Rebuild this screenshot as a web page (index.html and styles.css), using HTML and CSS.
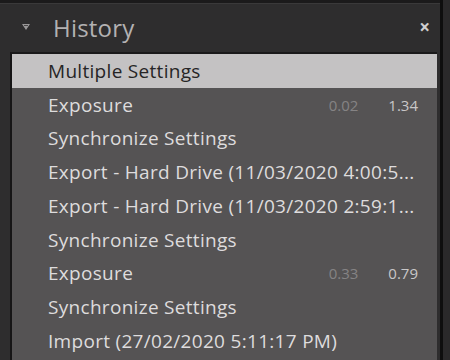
FILE: index.html
```html
<!DOCTYPE html>
<html>
<head>
<meta charset="utf-8">
<link rel="stylesheet" href="styles.css">
</head>
<body>
<div class="frame">
  <div class="panel">
    <div class="topline"></div>
    <div class="header">
      <svg class="tri" width="10" height="8" viewBox="0 0 10 8"><path d="M1 1 H9 L5 7 Z" fill="#9a9899"/><path d="M3 2.5 H7" stroke="#4a4849" stroke-width="1"/></svg>
      <span class="title">History</span>
      <span class="close">×</span>
    </div>
    <div class="list">
      <div class="row sel"><span class="name">Multiple Settings</span></div>
      <div class="row"><span class="name">Exposure</span><span class="vals"><span class="old">0.02</span><span class="new">1.34</span></span></div>
      <div class="row"><span class="name">Synchronize Settings</span></div>
      <div class="row"><span class="name">Export - Hard Drive (11/03/2020 4:00:5...</span></div>
      <div class="row"><span class="name">Export - Hard Drive (11/03/2020 2:59:1...</span></div>
      <div class="row"><span class="name">Synchronize Settings</span></div>
      <div class="row"><span class="name">Exposure</span><span class="vals"><span class="old">0.33</span><span class="new">0.79</span></span></div>
      <div class="row"><span class="name">Synchronize Settings</span></div>
      <div class="row"><span class="name">Import (27/02/2020 5:11:17 PM)</span></div>
    </div>
  </div>
  <div class="edge"></div>
</div>
</body>
</html>
```
FILE: styles.css
```css
html, body { margin: 0; padding: 0; }
body { width: 450px; height: 360px; overflow: hidden; background: #2c2b2c; font-family: "Open Sans", sans-serif; }
.frame { display: flex; height: 360px; }
.panel { width: 440px; display: flex; flex-direction: column; background: #2e2d2e; }
.edge { width: 10px; background: #2a292a; border-left: 3px solid #0e0e0e; box-sizing: border-box; }
.topline { height: 3px; background: #1b1a1b; border-bottom: 1px solid #3a393a; }
.header { height: 48px; display: flex; align-items: center; padding-left: 21px; padding-right: 10px; box-sizing: border-box; }
.tri { margin-right: 22px; margin-top: -2px; }
.title { color: #b3b1b2; font-size: 24px; letter-spacing: 0.2px; flex: 1; margin-top: -2px; }
.close { color: #d0cecf; font-size: 19px; font-weight: bold; margin-top: -2px; }
.list { margin-left: 10px; margin-right: 3px; border-left: 2px solid #161516; border-top: 2px solid #1a191a; background: #555354; flex: 1; }
.row { height: 33.75px; display: flex; align-items: center; padding-left: 36px; padding-right: 19px; color: #dedcdd; font-size: 19px; letter-spacing: 0.3px; }
.row.sel { background: #c4c2c3; color: #262526; }
.name { flex: 1; white-space: nowrap; }
.vals { display: flex; gap: 30px; font-size: 15px; letter-spacing: 0; }
.old { color: #858384; }
.new { color: #c9c7c8; }
```
